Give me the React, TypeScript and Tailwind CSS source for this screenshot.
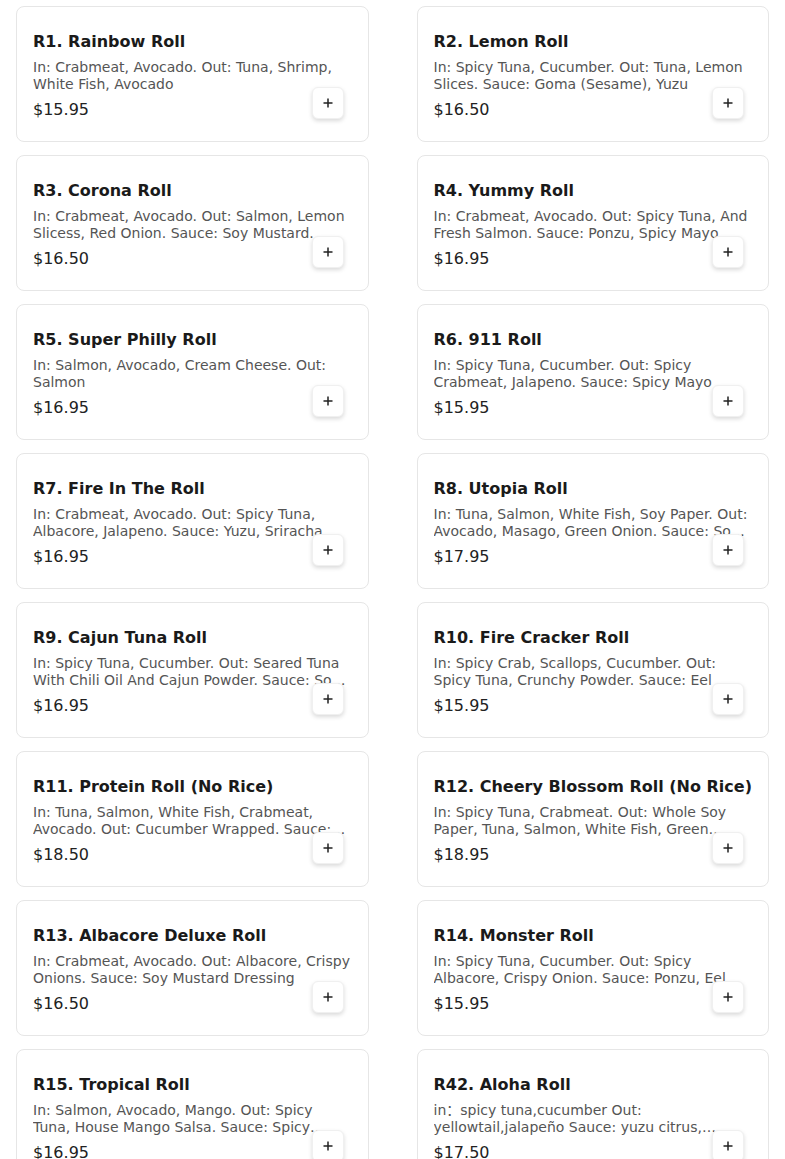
import React from "react";

type Item = { name: string; desc: string; price: string };

const items: Item[] = [
  { name: "R1. Rainbow Roll", desc: "In: Crabmeat, Avocado. Out: Tuna, Shrimp, White Fish, Avocado", price: "$15.95" },
  { name: "R2. Lemon Roll", desc: "In: Spicy Tuna, Cucumber. Out: Tuna, Lemon Slices. Sauce: Goma (Sesame), Yuzu", price: "$16.50" },
  { name: "R3. Corona Roll", desc: "In: Crabmeat, Avocado. Out: Salmon, Lemon Slicess, Red Onion. Sauce: Soy Mustard.", price: "$16.50" },
  { name: "R4. Yummy Roll", desc: "In: Crabmeat, Avocado. Out: Spicy Tuna, And Fresh Salmon. Sauce: Ponzu, Spicy Mayo", price: "$16.95" },
  { name: "R5. Super Philly Roll", desc: "In: Salmon, Avocado, Cream Cheese. Out: Salmon", price: "$16.95" },
  { name: "R6. 911 Roll", desc: "In: Spicy Tuna, Cucumber. Out: Spicy Crabmeat, Jalapeno. Sauce: Spicy Mayo", price: "$15.95" },
  { name: "R7. Fire In The Roll", desc: "In: Crabmeat, Avocado. Out: Spicy Tuna, Albacore, Jalapeno. Sauce: Yuzu, Sriracha", price: "$16.95" },
  { name: "R8. Utopia Roll", desc: "In: Tuna, Salmon, White Fish, Soy Paper. Out: Avocado, Masago, Green Onion. Sauce: Soy Mustard", price: "$17.95" },
  { name: "R9. Cajun Tuna Roll", desc: "In: Spicy Tuna, Cucumber. Out: Seared Tuna With Chili Oil And Cajun Powder. Sauce: Soy Mustard", price: "$16.95" },
  { name: "R10. Fire Cracker Roll", desc: "In: Spicy Crab, Scallops, Cucumber. Out: Spicy Tuna, Crunchy Powder. Sauce: Eel", price: "$15.95" },
  { name: "R11. Protein Roll (No Rice)", desc: "In: Tuna, Salmon, White Fish, Crabmeat, Avocado. Out: Cucumber Wrapped. Sauce: Ponzu", price: "$18.50" },
  { name: "R12. Cheery Blossom Roll (No Rice)", desc: "In: Spicy Tuna, Crabmeat. Out: Whole Soy Paper, Tuna, Salmon, White Fish, Green Onion", price: "$18.95" },
  { name: "R13. Albacore Deluxe Roll", desc: "In: Crabmeat, Avocado. Out: Albacore, Crispy Onions. Sauce: Soy Mustard Dressing", price: "$16.50" },
  { name: "R14. Monster Roll", desc: "In: Spicy Tuna, Cucumber. Out: Spicy Albacore, Crispy Onion. Sauce: Ponzu, Eel", price: "$15.95" },
  { name: "R15. Tropical Roll", desc: "In: Salmon, Avocado, Mango. Out: Spicy Tuna, House Mango Salsa. Sauce: Spicy Mayo", price: "$16.95" },
  { name: "R42. Aloha Roll", desc: "in\uFF1Aspicy tuna,cucumber Out: yellowtail,jalapeño Sauce: yuzu citrus, sriracha, eel sauce", price: "$17.50" },
];

function Card({ item }: { item: Item }) {
  return (
    <div className="relative h-[136px] rounded-lg border border-[#e6e6e6] bg-white px-4 pt-[23px] pb-5">
      <div className="text-base leading-6 font-bold text-[#1a1a1a] whitespace-nowrap">{item.name}</div>
      <p className="mt-[5px] text-sm leading-[17px] text-[#555555] line-clamp-2">{item.desc}</p>
      <div className="mt-[5px] text-base leading-6 text-[#222222]">{item.price}</div>
      <button className="absolute right-6 bottom-[22px] flex h-8 w-8 items-center justify-center rounded-md border border-[#f0f0f0] bg-white shadow-[0_2px_4px_rgba(0,0,0,0.15)]">
        <svg width="10" height="10" viewBox="0 0 10 10" fill="none">
          <path d="M5 0.5V9.5M0.5 5H9.5" stroke="#222" strokeWidth="1.5" />
        </svg>
      </button>
    </div>
  );
}

export default function App() {
  return (
    <div className="min-h-screen bg-white px-4 pt-[6px] pb-6" style={{ fontFamily: '"DejaVu Sans", "Noto Sans CJK SC", sans-serif' }}>
      <div className="grid grid-cols-2 gap-x-12 gap-y-[13px]">
        {items.map((it) => (
          <Card key={it.name} item={it} />
        ))}
      </div>
    </div>
  );
}
